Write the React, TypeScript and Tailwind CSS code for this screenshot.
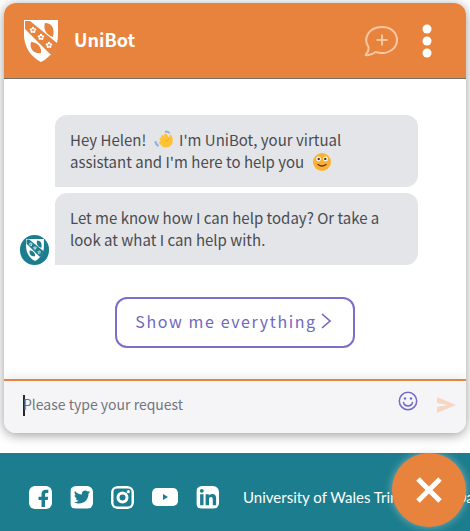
import React, { useState } from 'react';
import { FaTwitterSquare, FaLinkedin } from 'react-icons/fa';

const SOCIAL_LINKS = [
  { label: 'Facebook', icon: <FacebookIcon />, width: 'w-[23px]' },
  { label: 'Twitter', icon: <FaTwitterSquare size={26} className="shrink-0" />, width: 'w-[23px]' },
  { label: 'Instagram', icon: <InstagramIcon />, width: 'w-[23px]' },
  { label: 'YouTube', icon: <YoutubeIcon />, width: 'w-[26px]' },
  { label: 'LinkedIn', icon: <FaLinkedin size={26} className="shrink-0" />, width: 'w-[23px]' },
];

const FLOWERS = [
  [9, 10],
  [17, 17],
  [25, 25],
];

function Shield({ className, band }: { className: string; band: string }) {
  return (
    <svg viewBox="0 0 34 42" className={className} aria-hidden="true">
      <path d="M0 0H34V15C34 27 27 37 17 42C7 37 0 27 0 15Z" fill="#fff" />
      <path d="M1 1H6L33 23V25L28 34L26 34L1 9Z" fill={band} />
      <path d="M21 3C28 3 31 9 29 17C22 15 19 9 21 3Z" fill={band} />
      <path d="M7 22C13 22 18 27 17 33C10 34 5 29 7 22Z" fill={band} />
      {FLOWERS.map(([x, y]) => (
        <g key={x} fill="#fff">
          <circle cx={x} cy={y - 2} r="1.2" />
          <circle cx={x + 2} cy={y - 0.5} r="1.2" />
          <circle cx={x + 1.2} cy={y + 1.8} r="1.2" />
          <circle cx={x - 1.2} cy={y + 1.8} r="1.2" />
          <circle cx={x - 2} cy={y - 0.5} r="1.2" />
        </g>
      ))}
    </svg>
  );
}

function FacebookIcon() {
  return (
    <svg viewBox="0 0 23 23" className="h-[23px] w-[23px]" aria-hidden="true">
      <rect width="23" height="23" rx="4" fill="currentColor" />
      <path d="M12.500 21V14H9.500V10.700H12.500V8C12.500 5.200 14.200 3.700 17 3.700H19.300V7H17.600C16.500 7 16 7.500 16 8.500V10.700H19.200L18.700 14H16V21Z" fill="#1b7d8d" />
    </svg>
  );
}

function InstagramIcon() {
  return (
    <svg viewBox="0 0 23 23" className="h-[23px] w-[23px]" fill="none" stroke="currentColor" aria-hidden="true">
      <rect x="1.250" y="1.250" width="20.500" height="20.500" rx="5" strokeWidth="2.500" />
      <circle cx="11.500" cy="11.500" r="4.500" strokeWidth="3" />
      <circle cx="17.300" cy="5.700" r="1.600" fill="currentColor" stroke="none" />
    </svg>
  );
}

function YoutubeIcon() {
  return (
    <svg viewBox="0 0 26 20" className="h-5 w-[26px] shrink-0" aria-hidden="true">
      <rect y="1" width="26" height="18" rx="5" fill="currentColor" />
      <path d="M11 7L16 10L11 13Z" fill="#1b7d8d" />
    </svg>
  );
}

function WaveEmoji() {
  return (
    <svg viewBox="0 0 20 20" className="mr-0.5 ml-1 inline-block h-5 w-5 align-text-bottom" role="img" aria-label="Waving hand">
      <g stroke="#ffc233" strokeWidth="3" strokeLinecap="round">
        <path d="M7 9L12 14M8.500 6.500L14 12M11.500 5L15 10M6.500 12.500L10 16" />
      </g>
      <path d="M8 9L15 8C15 5 16.500 4 17.500 5C19 8 19.500 12 17.500 15C14.500 18.500 10 18 8 15Z" fill="#ffc233" />
      <path d="M12.500 12C12.500 10 14 9 15.500 8.500" fill="none" stroke="#f39d26" strokeWidth="1" />
      <path d="M11 2C13 1 15 2 15.500 3.500M1.500 11C1.500 13 2.500 15 4.500 16" fill="none" stroke="#8fb4dc" strokeWidth="2" />
    </svg>
  );
}

function SmileEmoji() {
  return (
    <svg viewBox="0 0 20 20" className="ml-1 inline-block h-5 w-5 align-text-bottom" role="img" aria-label="Smiling face">
      <circle cx="10" cy="10" r="9" fill="#fbb034" />
      <circle cx="6.500" cy="7" r="2.400" fill="#fff" />
      <circle cx="13.500" cy="7" r="2.400" fill="#fff" />
      <circle cx="6.700" cy="7" r="1.200" fill="#4b3425" />
      <circle cx="13.300" cy="7" r="1.200" fill="#4b3425" />
      <path d="M6 12.500Q10 15.500 14 12.500" fill="none" stroke="#5a3b1f" strokeWidth="1.400" strokeLinecap="round" />
    </svg>
  );
}

function Bubble({ children }: { children: React.ReactNode }) {
  return (
    <div className="rounded-xl rounded-bl-none bg-[#e4e5e9] px-[15px] py-[14px] text-[15px] leading-[22px] text-[#4a4c50]">
      {children}
    </div>
  );
}

export default function App() {
  const [message, setMessage] = useState('');

  return (
    <div className="flex min-h-screen flex-col overflow-hidden bg-white font-['Noto_Sans_CJK_SC',sans-serif]">
      <main className="mx-1 mt-[3px] mb-5 overflow-hidden rounded-xl bg-white shadow-[0_2px_12px_rgba(0,0,0,0.4)]">
        <header className="flex h-[76px] items-center border-b border-[#76706b] bg-[#e8833e] pr-[34px] pl-5 text-white">
          <Shield className="h-[42px] w-[34px]" band="#e8833e" />
          <h1 className="ml-4 pb-1 text-lg font-bold">UniBot</h1>
          <button type="button" aria-label="New conversation" className="ml-auto text-[#fbc7a0]">
            <svg viewBox="0 0 34 32" className="h-8 w-[34px]" fill="none" stroke="currentColor" strokeWidth="2" strokeLinecap="round" strokeLinejoin="round">
              <path d="M4.500 22C-1 14 4 2 18 2C27 2 33 7.500 33 15C33 22 27 28 18 28C15.500 28 13.500 27.500 11.500 27C8.500 29.500 5 30.500 1.500 30C4 27.500 5 25 4.500 22Z" />
              <path d="M18 9.500V20.500M12.500 15H23.500" strokeLinecap="butt" />
            </svg>
          </button>
          <button type="button" aria-label="Menu" className="ml-6">
            <svg viewBox="0 0 10 34" className="h-[34px] w-[10px]" fill="currentColor">
              <circle cx="5" cy="5" r="4.500" />
              <circle cx="5" cy="17" r="4.500" />
              <circle cx="5" cy="29" r="4.500" />
            </svg>
          </button>
        </header>

        <section className="pt-9 pr-12 pb-[31px] pl-4">
          <div className="flex items-end gap-[6px]">
            <div className="flex h-[30px] w-[29px] shrink-0 items-center justify-center rounded-full bg-[#1b7d8d]">
              <Shield className="h-[22px] w-[18px]" band="#1b7d8d" />
            </div>
            <div className="flex flex-1 flex-col gap-[6px]">
              <Bubble>
                Hey Helen! <WaveEmoji /> I'm UniBot, your virtual assistant and I'm here to help you <SmileEmoji />
              </Bubble>
              <Bubble>Let me know how I can help today? Or take a look at what I can help with.</Bubble>
            </div>
          </div>
          <div className="mt-8 flex justify-center pl-8">
            <button type="button" className="flex items-center gap-1 rounded-xl border-2 border-[#7a70cb] pt-[10px] pr-[22px] pb-[13px] pl-[18px] text-base leading-6 tracking-widest text-[#6f68bd]">
              Show me everything
              <svg viewBox="0 0 10 16" className="h-4 w-[10px]" fill="none" stroke="currentColor" strokeWidth="1.600">
                <path d="M1 1L9 8L1 15" />
              </svg>
            </button>
          </div>
        </section>

        <form
          onSubmit={(e) => e.preventDefault()}
          className="flex h-[54px] items-center border-t-2 border-[#e8833e] bg-[#f5f5f8] pr-[10px] pb-1 pl-[19px] shadow-[0_-3px_10px_rgba(0,0,0,0.08)]"
        >
          {!message && <span className="-mr-[2px] h-[21px] w-[2px] bg-[#25252b]" />}
          <input
            aria-label="Message"
            value={message}
            onChange={(e) => setMessage(e.target.value)}
            placeholder="Please type your request"
            className="min-w-0 flex-1 bg-transparent pb-0.5 text-sm text-[#4a4c50] outline-none placeholder:text-[#73757e]"
          />
          <button type="button" aria-label="Emoji" className="mb-2 text-[#7469ce]">
            <svg viewBox="0 0 20 20" className="h-5 w-5" fill="none" stroke="currentColor" strokeWidth="1.500">
              <circle cx="10" cy="10" r="8.700" />
              <path d="M5.500 11.500C6.500 16 13.500 16 14.500 11.500" strokeLinecap="round" />
              <circle cx="7" cy="7.500" r="1.200" fill="currentColor" stroke="none" />
              <circle cx="13" cy="7.500" r="1.200" fill="currentColor" stroke="none" />
            </svg>
          </button>
          <button type="submit" aria-label="Send" className="ml-[18px] text-[#f7d6c3]">
            <svg viewBox="0 0 20 16" className="h-4 w-5" fill="currentColor">
              <path d="M1 0L20 8L1 16V10L12 8L1 6Z" />
            </svg>
          </button>
        </form>
      </main>

      <footer className="relative flex flex-1 items-center bg-[#1b7d8d] pt-[10px] pl-[29px] text-white">
        <nav className="flex shrink-0 items-center gap-[18px]">
          {SOCIAL_LINKS.map((link) => (
            <a
              key={link.label}
              href="#"
              aria-label={link.label}
              className={`flex h-[23px] items-center justify-center overflow-hidden rounded-md ${link.width}`}
            >
              {link.icon}
            </a>
          ))}
        </nav>
        <p className="ml-6 w-0 flex-1 overflow-hidden font-[Lato,sans-serif] text-[15px] whitespace-nowrap">
          University of Wales Trinity Saint David
        </p>
        <button
          type="button"
          aria-label="Close chat"
          className="absolute top-0 right-1 flex h-[74px] w-[74px] items-center justify-center rounded-full bg-[#e8833e] shadow-[0_0_8px_rgba(200,210,210,0.6)]"
        >
          <svg viewBox="0 0 26 26" className="h-[26px] w-[26px]" stroke="currentColor" strokeWidth="5">
            <path d="M2 2L24 24M24 2L2 24" />
          </svg>
        </button>
      </footer>
    </div>
  );
}
